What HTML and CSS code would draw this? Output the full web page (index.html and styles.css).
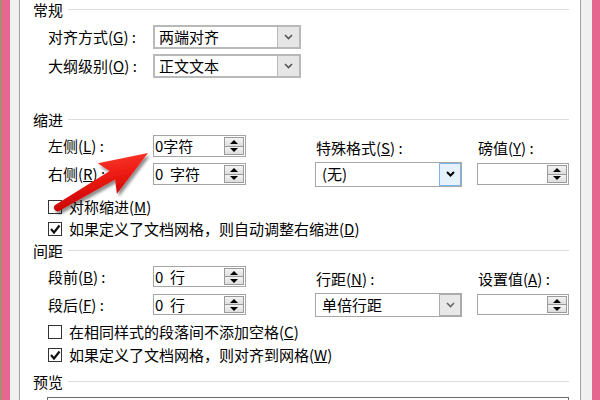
FILE: index.html
```html
<!DOCTYPE html>
<html lang="zh-CN">
<head>
<meta charset="utf-8">
<title>段落</title>
<link rel="stylesheet" href="styles.css">
</head>
<body>
<div class="window">
  <div class="edge-left"></div>
  <div class="chrome-left"></div>
  <div class="panel">
    <div class="group-title">常规</div>
    <div class="form-row">
      <span class="lbl">对齐方式(<u>G</u>) :</span>
      <div class="combo">
        <span class="combo-text">两端对齐</span>
        <span class="combo-btn"><svg width="9" height="6" viewBox="0 0 9 6"><path d="M1 1 L4.5 4.5 L8 1" fill="none" stroke="#555" stroke-width="1.6"/></svg></span>
      </div>
    </div>
    <div class="form-row">
      <span class="lbl">大纲级别(<u>O</u>) :</span>
      <div class="combo">
        <span class="combo-text">正文文本</span>
        <span class="combo-btn"><svg width="9" height="6" viewBox="0 0 9 6"><path d="M1 1 L4.5 4.5 L8 1" fill="none" stroke="#555" stroke-width="1.6"/></svg></span>
      </div>
    </div>

    <div class="group-title gt-indent">缩进</div>
    <div class="ctl-grid">
      <span class="lbl">左侧(<u>L</u>) :</span>
      <div class="spin">
        <span class="spin-text">0字符</span>
        <span class="spin-btns"><span class="spin-btn"><i class="tri-up"></i></span><span class="spin-btn"><i class="tri-down"></i></span></span>
      </div>
      <span></span>
      <span class="lbl-top">特殊格式(<u>S</u>) :</span>
      <span></span>
      <span class="lbl-top">磅值(<u>Y</u>) :</span>

      <span class="lbl">右侧(<u>R</u>) :</span>
      <div class="spin">
        <span class="spin-text">0&nbsp;&nbsp;字符</span>
        <span class="spin-btns"><span class="spin-btn"><i class="tri-up"></i></span><span class="spin-btn"><i class="tri-down"></i></span></span>
      </div>
      <span></span>
      <div class="combo combo-thin combo-focus">
        <span class="combo-text">(无)</span>
        <span class="combo-btn"><svg width="9" height="6" viewBox="0 0 9 6"><path d="M1 1 L4.5 4.5 L8 1" fill="none" stroke="#000" stroke-width="2"/></svg></span>
      </div>
      <span></span>
      <div class="spin">
        <span class="spin-text"></span>
        <span class="spin-btns"><span class="spin-btn"><i class="tri-up"></i></span><span class="spin-btn"><i class="tri-down"></i></span></span>
      </div>
    </div>
    <div class="check-row cr-first">
      <span class="box"></span>
      <span>对称缩进(<u>M</u>)</span>
    </div>
    <div class="check-row">
      <span class="box"><svg width="12" height="12" viewBox="0 0 12 12"><path d="M2 6 L5 9.5 L10.5 2.5" fill="none" stroke="#111" stroke-width="2.2"/></svg></span>
      <span>如果定义了文档网格，则自动调整右缩进(<u>D</u>)</span>
    </div>

    <div class="group-title gt-spacing">间距</div>
    <div class="ctl-grid ctl-grid-tight">
      <span class="lbl">段前(<u>B</u>) :</span>
      <div class="spin">
        <span class="spin-text">0&nbsp;&nbsp;行</span>
        <span class="spin-btns"><span class="spin-btn"><i class="tri-up"></i></span><span class="spin-btn"><i class="tri-down"></i></span></span>
      </div>
      <span></span>
      <span class="lbl-top">行距(<u>N</u>) :</span>
      <span></span>
      <span class="lbl-top">设置值(<u>A</u>) :</span>

      <span class="lbl">段后(<u>F</u>) :</span>
      <div class="spin">
        <span class="spin-text">0&nbsp;&nbsp;行</span>
        <span class="spin-btns"><span class="spin-btn"><i class="tri-up"></i></span><span class="spin-btn"><i class="tri-down"></i></span></span>
      </div>
      <span></span>
      <div class="combo combo-thin combo-line">
        <span class="combo-text">单倍行距</span>
        <span class="combo-btn"><svg width="9" height="6" viewBox="0 0 9 6"><path d="M1 1 L4.5 4.5 L8 1" fill="none" stroke="#666" stroke-width="1.6"/></svg></span>
      </div>
      <span></span>
      <div class="spin">
        <span class="spin-text"></span>
        <span class="spin-btns"><span class="spin-btn"><i class="tri-up"></i></span><span class="spin-btn"><i class="tri-down"></i></span></span>
      </div>
    </div>
    <div class="check-row cr-second">
      <span class="box"></span>
      <span>在相同样式的段落间不添加空格(<u>C</u>)</span>
    </div>
    <div class="check-row cr-gap">
      <span class="box"><svg width="12" height="12" viewBox="0 0 12 12"><path d="M2 6 L5 9.5 L10.5 2.5" fill="none" stroke="#111" stroke-width="2.2"/></svg></span>
      <span>如果定义了文档网格，则对齐到网格(<u>W</u>)</span>
    </div>

    <div class="group-title gt-preview">预览</div>
    <div class="preview"></div>
  </div>
  <div class="chrome-right"></div>
  <div class="edge-right"></div>
</div>

<svg class="annot" width="600" height="400" viewBox="0 0 600 400">
  <defs>
    <linearGradient id="red" x1="0" y1="0" x2="0.3" y2="1">
      <stop offset="0" stop-color="#ff4a3d"/>
      <stop offset="0.5" stop-color="#ee1c14"/>
      <stop offset="1" stop-color="#c40000"/>
    </linearGradient>
    <filter id="sh" x="-20%" y="-20%" width="140%" height="140%">
      <feGaussianBlur in="SourceAlpha" stdDeviation="1.6"/>
      <feOffset dx="1.5" dy="2.5" result="b"/>
      <feComponentTransfer><feFuncA type="linear" slope="0.45"/></feComponentTransfer>
      <feMerge><feMergeNode/><feMergeNode in="SourceGraphic"/></feMerge>
    </filter>
  </defs>
  <path filter="url(#sh)" fill="url(#red)" d="M148 153 L97.7 163.3 L109.7 171.1 L55.1 205 A3.6 3.6 0 0 0 58.9 211 L115.1 179.5 L116.9 193.7 Z"/>
</svg>
</body>
</html>
```

FILE: styles.css
```css
* { box-sizing: border-box; }

html, body {
  margin: 0;
  padding: 0;
}

body {
  width: 600px;
  height: 400px;
  overflow: hidden;
  position: relative;
  background: #fff;
  color: #000;
  font-family: "Noto Sans CJK SC", "Noto Sans", sans-serif;
  font-size: 15px;
}

u { text-decoration: underline; text-underline-offset: 1px; }

.window {
  display: flex;
  height: 400px;
}

.edge-left {
  width: 10px;
  border-left: 1px solid #74b043;
  background: #e5678f;
}

.chrome-left {
  width: 10px;
  background: #f0f0f0;
  border-right: 1px solid #a0a0a0;
}

.panel {
  flex: 1;
  background: #fff;
  padding: 0 11px 0 13px;
  overflow: hidden;
}

.chrome-right {
  width: 12px;
  background: #f0f0f0;
  border-left: 1px solid #a0a0a0;
}

.edge-right {
  width: 8px;
  background: #e5678f;
}

/* group titles */
.group-title {
  display: flex;
  align-items: center;
  height: 20px;
  line-height: 20px;
  white-space: nowrap;
}

.group-title::after {
  content: "";
  flex: 1;
  height: 1px;
  background: #dcdcdc;
  margin-left: 5px;
  margin-top: -2px;
}

.gt-indent { margin-top: 32px; }
.gt-spacing { margin-top: 1px; }
.gt-preview { margin-top: 6px; }

/* general rows */
.form-row {
  display: flex;
  align-items: center;
  height: 24px;
  padding-left: 15px;
  margin-top: 5px;
}

.lbl {
  width: 105px;
  white-space: nowrap;
  line-height: 20px;
}

.lbl-top {
  white-space: nowrap;
  line-height: 20px;
  padding-left: 1px;
  margin-top: 4px;
}

/* combo boxes */
.combo {
  display: flex;
  width: 148px;
  height: 24px;
  border: 2px solid #b9b9b9;
  background: #fff;
}

.combo-text {
  flex: 1;
  padding-left: 4px;
  line-height: 20px;
  white-space: nowrap;
}

.combo-btn {
  width: 22px;
  display: flex;
  align-items: center;
  justify-content: center;
  background: #e6e6e6;
  border-left: 1px solid #b9b9b9;
}

.combo-thin {
  width: 147px;
  border: 1px solid #a8a8a8;
  align-self: center;
}

.combo-thin .combo-text {
  padding-left: 6px;
  line-height: 22px;
}

.combo-focus {
  height: 25px;
}

.combo-focus .combo-btn {
  background: #e5f1fb;
  border: 1px solid #7eb4ea;
}

.combo-line {
  height: 24px;
}

.combo-line .combo-btn {
  background: #e8e8e8;
  border: 1px solid #adadad;
}

/* grids of spin/combos */
.ctl-grid {
  display: grid;
  grid-template-columns: 105px 93px 69px 147px 15px 92px;
  grid-template-rows: 22px 22px;
  row-gap: 6px;
  align-items: center;
  margin: 5px 0 0 15px;
}

.ctl-grid-tight {
  grid-template-rows: 21px 21px;
  row-gap: 7px;
}

.spin {
  display: flex;
  height: 100%;
  border: 1px solid #a5a5a5;
  background: #fff;
}

.spin-text {
  flex: 1;
  padding-left: 1px;
  line-height: 19px;
  white-space: nowrap;
}

.spin-btns {
  display: flex;
  flex-direction: column;
  width: 20px;
  margin: 1px 1px 1px 0;
}

.spin-btn {
  flex: 1;
  display: flex;
  align-items: center;
  justify-content: center;
  border: 1px solid #9a9a9a;
  background: linear-gradient(#f3f3f3, #dedede);
}

.spin-btn + .spin-btn { border-top: 0; }

.tri-up {
  width: 0;
  height: 0;
  border-left: 4px solid transparent;
  border-right: 4px solid transparent;
  border-bottom: 4px solid #000;
}

.tri-down {
  width: 0;
  height: 0;
  border-left: 4px solid transparent;
  border-right: 4px solid transparent;
  border-top: 4px solid #000;
}

/* check boxes */
.check-row {
  display: flex;
  align-items: center;
  height: 22px;
  padding-left: 15px;
  white-space: nowrap;
  line-height: 20px;
}

.cr-first { margin-top: 11px; }
.cr-second { margin-top: 6px; }
.cr-gap { margin-top: 1px; }

.box {
  width: 14px;
  height: 14px;
  border: 1px solid #333;
  background: #fff;
  margin-right: 7px;
  display: flex;
  align-items: center;
  justify-content: center;
  flex: none;
}

.preview {
  margin: 5px 0 0 14px;
  height: 30px;
  border: 1px solid #6b6b6b;
  background: #fff;
}

/* annotation overlay */
.annot {
  position: absolute;
  left: 0;
  top: 0;
  pointer-events: none;
}
```
